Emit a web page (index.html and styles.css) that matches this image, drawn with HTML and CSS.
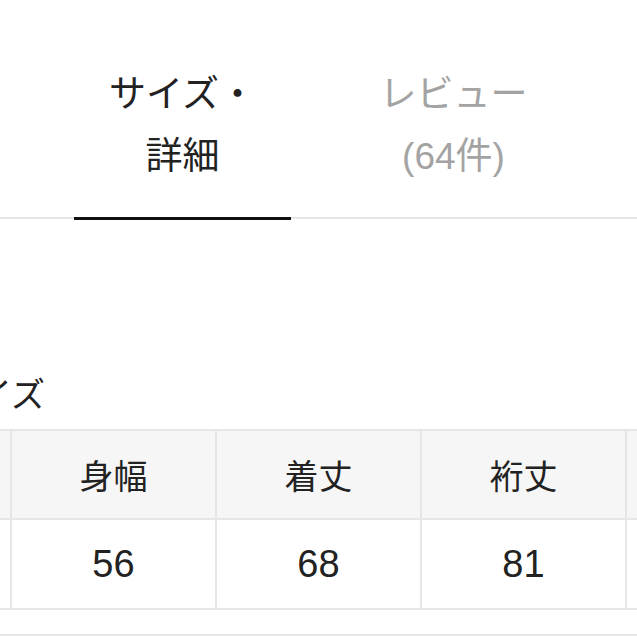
FILE: index.html
```html
<!DOCTYPE html>
<html lang="ja">
<head>
<meta charset="utf-8">
<link rel="stylesheet" href="styles.css">
</head>
<body>
<div class="tabbar">
  <div class="tab active">サイズ・<br>詳細</div>
  <div class="tab inactive">レビュー<br>(64件)</div>
</div>
<h2 class="heading">サイズ</h2>
<div class="size-grid">
  <div class="cell head"></div>
  <div class="cell head">身幅</div>
  <div class="cell head">着丈</div>
  <div class="cell head">裄丈</div>
  <div class="cell head"></div>
  <div class="cell"></div>
  <div class="cell">56</div>
  <div class="cell">68</div>
  <div class="cell">81</div>
  <div class="cell"></div>
</div>
<div class="next-block"></div>
</body>
</html>
```

FILE: styles.css
```css
html, body {
  margin: 0;
  padding: 0;
  background: #ffffff;
  overflow: hidden;
}
body {
  width: 637px;
  height: 637px;
  font-family: "Liberation Sans", "Noto Sans CJK JP", sans-serif;
  color: #222222;
}
.tabbar {
  display: flex;
  padding: 0 47px;
  border-bottom: 2px solid #e6e6e6;
}
.tab {
  position: relative;
  width: 271px;
  flex: 0 0 271px;
  text-align: center;
  font-size: 37px;
  line-height: 62px;
  padding-top: 64px;
  padding-bottom: 29px;
  box-sizing: border-box;
}
.tab.inactive {
  color: #a3a3a3;
}
.tab.active::after {
  content: "";
  position: absolute;
  left: 10%;
  right: 10%;
  bottom: -3px;
  height: 3px;
  background: #111111;
}
.heading {
  margin: 159px 0 17px -56px;
  font-size: 34px;
  line-height: 34px;
  font-weight: normal;
  white-space: nowrap;
}
.size-grid {
  display: grid;
  grid-template-columns: repeat(5, 203px);
  grid-template-rows: 87px 88px;
  gap: 2px;
  padding: 2px;
  margin-left: -195px;
  width: max-content;
  background: #e6e6e6;
}
.cell {
  background: #ffffff;
  display: flex;
  align-items: center;
  justify-content: center;
  font-size: 38px;
}
.cell.head {
  background: #f6f6f6;
  font-size: 34px;
}
.next-block {
  margin-top: 24px;
  border-top: 2px solid #e6e6e6;
  height: 20px;
}
```
